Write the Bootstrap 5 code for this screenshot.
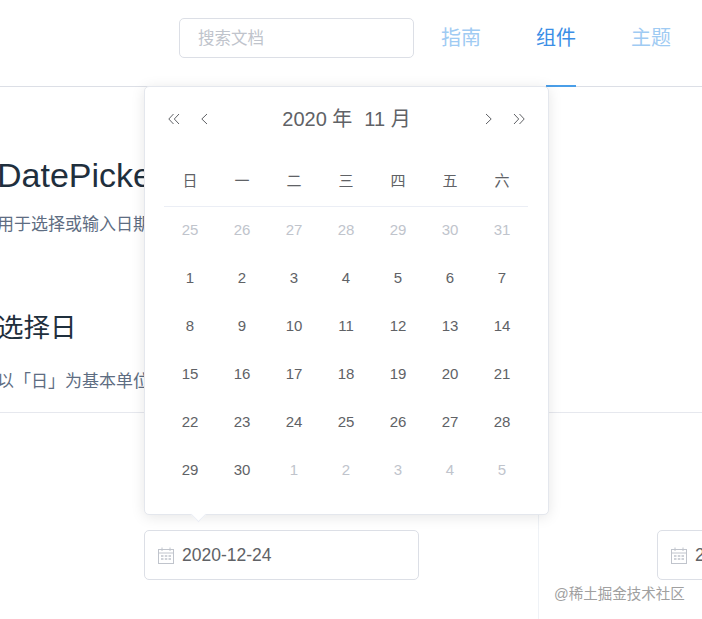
<!DOCTYPE html>
<html lang="zh-CN">
<head>
<meta charset="utf-8">
<title>DatePicker</title>
<link href="https://cdn.jsdelivr.net/npm/bootstrap@5.3.0/dist/css/bootstrap.min.css" rel="stylesheet">
<style>
html,body{overflow:hidden;height:100%;}
body{position:relative;width:702px;height:619px;background:#fff;color:#606266;font-family:"Liberation Sans","Noto Sans CJK SC",sans-serif;}
.site-head{height:87px;border-bottom:1px solid #dcdfe6;padding-left:179px;}
.search-box{width:235px;height:40px;margin-top:18px;border:1px solid #dcdfe6;border-radius:5px;font-size:16.5px;padding:1px 18px 0 18px;color:#606266;box-shadow:none;}
.search-box::placeholder{color:#c0c4cc;}
.site-nav{margin-left:27px;gap:55px;}
.site-nav .nav-link{position:relative;height:86px;padding:0;line-height:38px;padding-top:19px;font-size:20px;color:#9fcbf3;}
.site-nav .nav-link.is-on{color:#3a8ee6;}
.site-nav .nav-link.is-on::after{content:"";position:absolute;left:10px;width:30px;bottom:-1px;height:2px;background:#4a9ee8;}
.doc-body{margin-left:-3px;color:#1f2f3d;}
.doc-h1{font-size:34px;font-weight:400;margin:0;padding-top:69px;line-height:38px;color:#1f2f3d;}
.doc-h3{font-size:26.5px;font-weight:400;margin:0;padding-top:72px;line-height:38px;color:#1f2f3d;}
.doc-p{font-size:17px;color:#5e6d82;margin:0;line-height:24px;}
.para-a{padding-top:19px;}
.para-b{padding-top:23px;padding-bottom:18px;}
.pick-row{border-top:1px solid #e6e8ee;width:1100px;height:210px;margin-left:-3px;}
.pick-cell{padding-top:117px;}
.pick-one{width:542px;padding-left:147px;border-right:1px solid #eff2f6;}
.pick-two{padding-left:118px;}
.date-box{width:275px;height:50px;border:1px solid #dcdfe6;border-radius:5px;font-size:17.5px;color:#606266;padding-left:13px;gap:8px;}
.date-box svg{flex:none;}
.cal-pop{position:absolute;left:144px;top:86px;width:405px;height:429px;background:#fff;border:1px solid #e4e7ed;border-radius:5px;box-shadow:0 2px 14px rgba(0,0,0,.1);padding:0 19px;z-index:5;}
.cal-pop::after{content:"";position:absolute;left:48px;bottom:-6px;width:11px;height:11px;background:#fff;transform:rotate(45deg);border-right:1px solid #ebeef5;border-bottom:1px solid #ebeef5;}
.cal-top{height:63px;font-size:20px;color:#606266;}
.cal-top svg{display:block;}
.cal-nav-group{gap:20px;}
.cal-title span+span{margin-left:12px;}
.cal-grid{width:364px;table-layout:fixed;border-collapse:collapse;font-size:15px;color:#606266;text-align:center;margin-top:8px;}
.cal-grid th{font-weight:400;height:48px;border-bottom:1px solid #ebeef5;padding:0 0 1px;}
.cal-grid td{height:48px;padding:0;}
.cal-grid .is-off{color:#c0c4cc;}
.mark-note{position:absolute;left:554px;top:584px;font-size:14.5px;line-height:20px;color:#a0a0a0;z-index:6;}
</style>
</head>
<body>
<header class="site-head d-flex align-items-start">
  <input class="form-control search-box" type="text" placeholder="搜索文档">
  <ul class="nav site-nav">
    <li class="nav-item"><a class="nav-link" href="#">指南</a></li>
    <li class="nav-item"><a class="nav-link is-on" href="#">组件</a></li>
    <li class="nav-item"><a class="nav-link" href="#">主题</a></li>
  </ul>
</header>
<main>
  <div class="doc-body">
    <h1 class="doc-h1">DatePicker</h1>
    <p class="doc-p para-a">用于选择或输入日期</p>
    <h3 class="doc-h3">选择日</h3>
    <p class="doc-p para-b">以「日」为基本单位</p>
  </div>
  <div class="pick-row d-flex">
    <div class="pick-cell pick-one">
      <div class="date-box d-flex align-items-center">
        <svg width="16" height="17" viewBox="0 0 16 17" fill="none" stroke="#c0c4cc" stroke-width="1"><rect x="0.5" y="2.5" width="15" height="14"/><path d="M0.5 6h15M4 0.5v3.500M12 0.5v3.500"/><path d="M3 9h2.500M6.800 9h2.500M10.500 9h2.500M3 12h2.500M6.800 12h2.500M10.500 12h2.500" stroke-width="1.500"/></svg>
        <span>2020-12-24</span>
      </div>
    </div>
    <div class="pick-cell pick-two">
      <div class="date-box d-flex align-items-center">
        <svg width="16" height="17" viewBox="0 0 16 17" fill="none" stroke="#c0c4cc" stroke-width="1"><rect x="0.5" y="2.5" width="15" height="14"/><path d="M0.5 6h15M4 0.5v3.500M12 0.5v3.500"/><path d="M3 9h2.500M6.800 9h2.500M10.500 9h2.500M3 12h2.500M6.800 12h2.500M10.500 12h2.500" stroke-width="1.500"/></svg>
        <span>2020-12-24</span>
      </div>
    </div>
  </div>
</main>
<section class="cal-pop">
  <div class="cal-top d-flex align-items-center justify-content-between">
    <div class="d-flex align-items-center cal-nav-group ps-1">
      <svg width="12" height="12" viewBox="0 0 12 12" fill="none" stroke="#606266"><path d="M5.500 1 0.800 6l4.700 5M11 1 6.300 6l4.700 5"/></svg>
      <svg width="8" height="12" viewBox="0 0 8 12" fill="none" stroke="#606266"><path d="M7 1 1.800 6 7 11"/></svg>
    </div>
    <div class="cal-title"><span>2020 年</span><span>11 月</span></div>
    <div class="d-flex align-items-center cal-nav-group pe-1">
      <svg width="8" height="12" viewBox="0 0 8 12" fill="none" stroke="#606266"><path d="M1 1 6.200 6 1 11"/></svg>
      <svg width="12" height="12" viewBox="0 0 12 12" fill="none" stroke="#606266"><path d="M1 1l4.700 5L1 11M6.500 1l4.700 5-4.700 5"/></svg>
    </div>
  </div>
  <table class="cal-grid">
    <thead><tr><th>日</th><th>一</th><th>二</th><th>三</th><th>四</th><th>五</th><th>六</th></tr></thead>
    <tbody>
      <tr class="is-off"><td>25</td><td>26</td><td>27</td><td>28</td><td>29</td><td>30</td><td>31</td></tr>
      <tr><td>1</td><td>2</td><td>3</td><td>4</td><td>5</td><td>6</td><td>7</td></tr>
      <tr><td>8</td><td>9</td><td>10</td><td>11</td><td>12</td><td>13</td><td>14</td></tr>
      <tr><td>15</td><td>16</td><td>17</td><td>18</td><td>19</td><td>20</td><td>21</td></tr>
      <tr><td>22</td><td>23</td><td>24</td><td>25</td><td>26</td><td>27</td><td>28</td></tr>
      <tr><td>29</td><td>30</td><td class="is-off">1</td><td class="is-off">2</td><td class="is-off">3</td><td class="is-off">4</td><td class="is-off">5</td></tr>
    </tbody>
  </table>
</section>
<div class="mark-note">@稀土掘金技术社区</div>
<script src="https://cdn.jsdelivr.net/npm/bootstrap@5.3.0/dist/js/bootstrap.bundle.min.js"></script>
</body>
</html>
